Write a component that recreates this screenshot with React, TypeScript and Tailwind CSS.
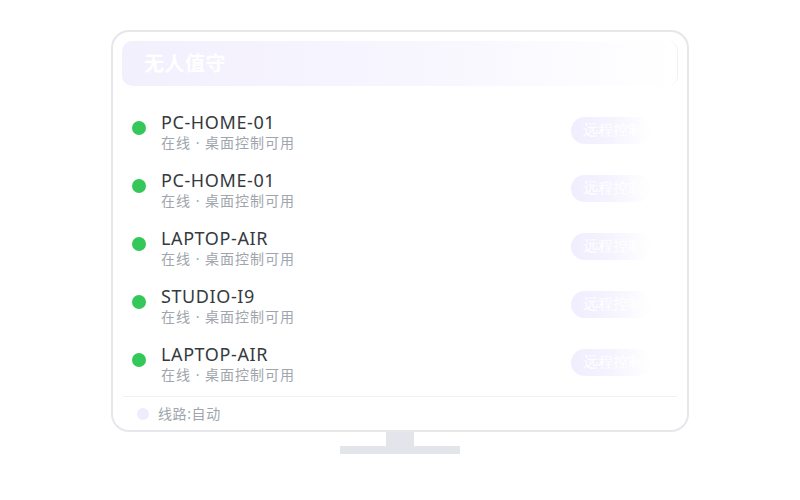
import React from "react";

const rows = [
  "PC-HOME-01",
  "PC-HOME-01",
  "LAPTOP-AIR",
  "STUDIO-I9",
  "LAPTOP-AIR",
];

export default function App() {
  return (
    <div
      className="w-[800px] h-[500px] bg-white flex flex-col items-center"
      style={{ fontFamily: '"Noto Sans", "Noto Sans CJK SC", sans-serif' }}
    >
      <div className="mt-[30px] w-[578px] h-[402px] border-2 border-[#e5e7eb] rounded-[18px] bg-white flex flex-col px-[9px] pt-[9px]">
        <div className="h-[45px] shrink-0 rounded-[10px] bg-gradient-to-r from-[#f3f0fe] via-[#f7f5fe] to-white/0 flex items-center pl-[22px] border-r border-[#f0f0f3]">
          <span className="text-white font-bold text-[20px] tracking-[0.5px] leading-none">无人值守</span>
        </div>
        <div className="shrink-0 flex flex-col gap-[16px] pt-[25px] pb-[11px]">
          {rows.map((name, i) => (
            <div key={i} className="h-[42px] shrink-0 flex items-start pl-[10px]">
              <div className="w-[14px] h-[14px] rounded-full bg-[#34c759] mt-[10px] shrink-0" />
              <div className="ml-[15px] flex flex-col flex-1">
                <span className="text-[18px] leading-[22px] tracking-[0.6px] text-[#353a40]">{name}</span>
                <span className="text-[14px] leading-[20px] tracking-[1px] text-[#a0a5ad]">在线 · 桌面控制可用</span>
              </div>
              <div className="mt-[6px] mr-[27px] w-[80px] h-[27px] rounded-full bg-gradient-to-r from-[#f0edfe] via-[#f5f3fe] to-white/0 flex items-center pl-[12px]">
                <span className="text-white text-[15px] leading-none font-serif whitespace-nowrap">远程控制</span>
              </div>
            </div>
          ))}
        </div>
        <div className="flex-1 border-t border-[#eef0f3] mx-[1px] flex items-center pl-[14px]">
          <div className="w-[12px] h-[12px] rounded-full bg-[#efedfc]" />
          <span className="ml-[9px] text-[14px] tracking-[0.6px] text-[#a0a5ad]">线路:自动</span>
        </div>
      </div>
      <div className="w-[28px] h-[14px] bg-[#e2e6ea]" />
      <div className="w-[120px] h-[8px] bg-[#e2e6ea]" />
    </div>
  );
}
